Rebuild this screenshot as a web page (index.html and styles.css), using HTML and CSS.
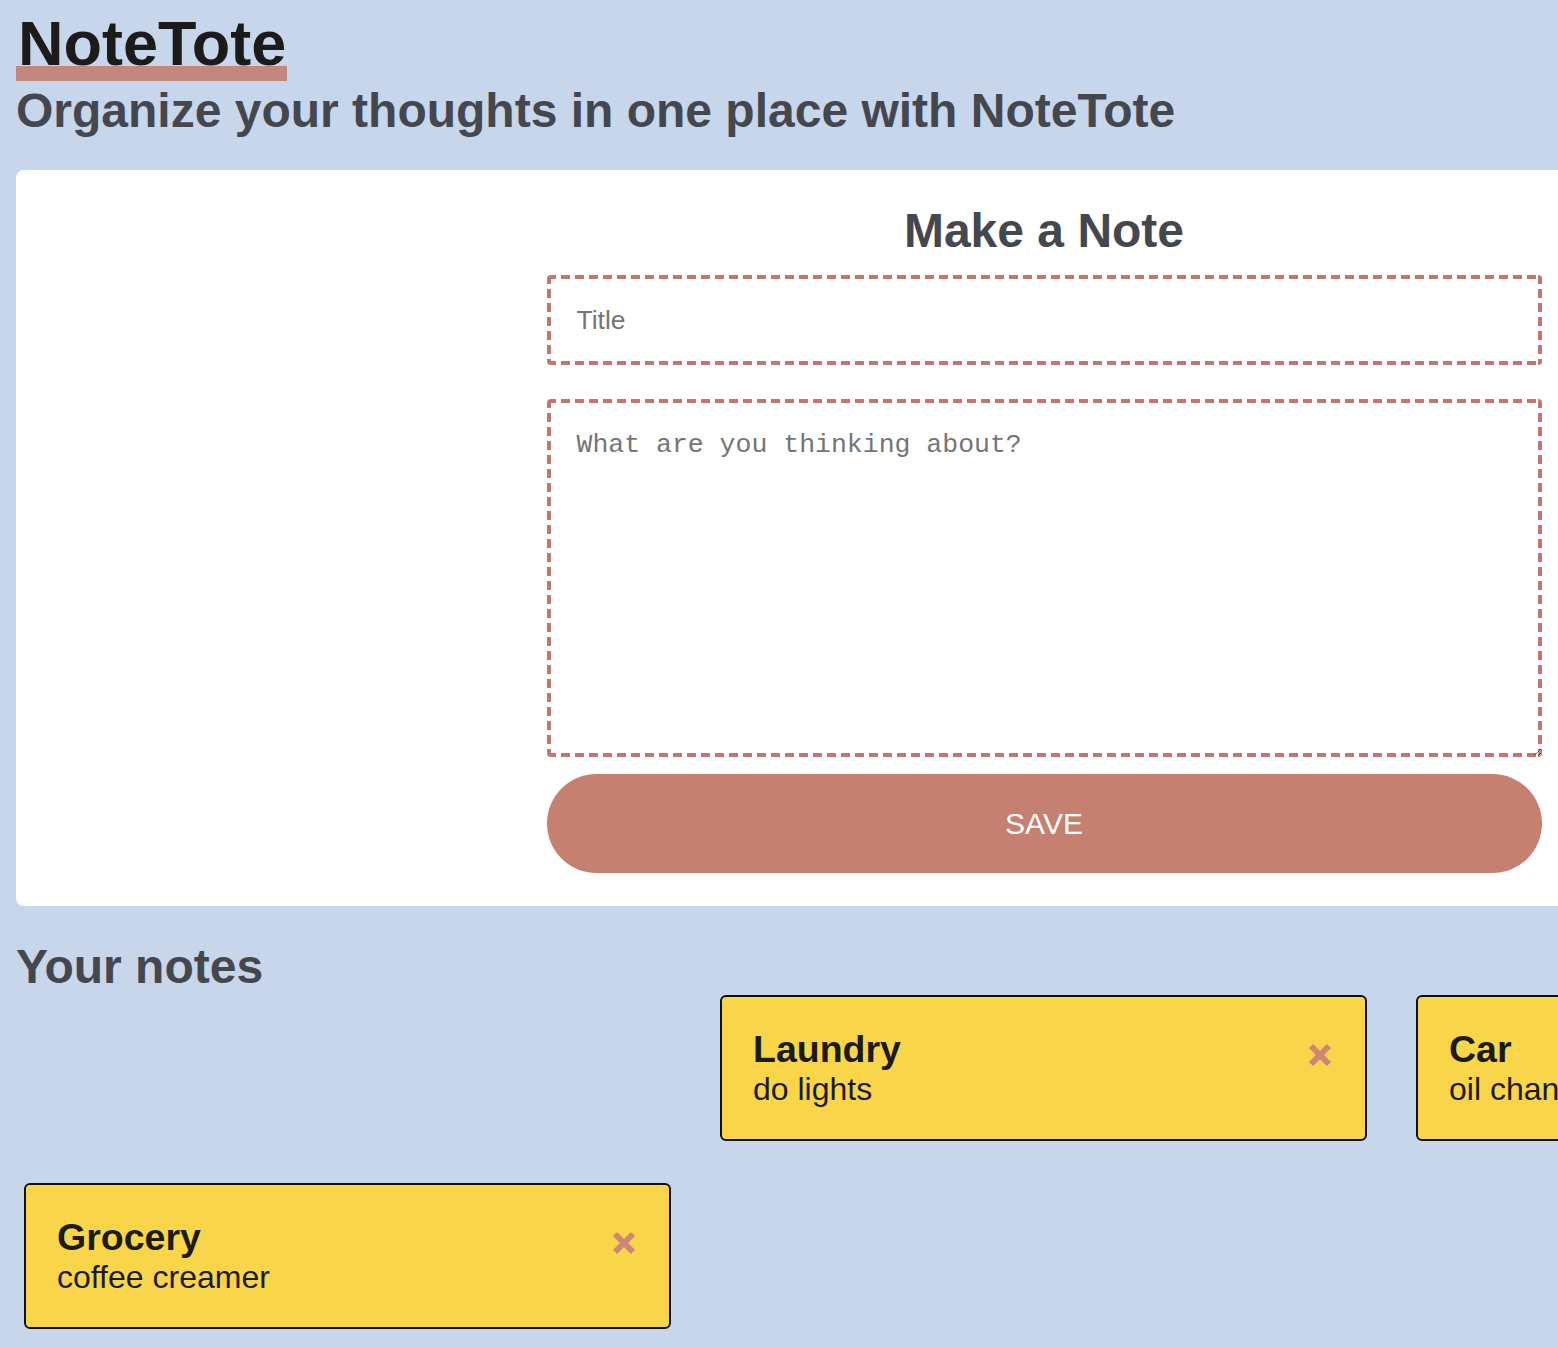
FILE: index.html
```html
<!DOCTYPE html>
<html lang="en">
<head>
<meta charset="utf-8">
<title>NoteTote</title>
<link rel="stylesheet" href="styles.css">
</head>
<body>
<div class="page">
  <header class="header">
    <h1 class="logo">NoteTote</h1>
    <h2 class="tagline">Organize your thoughts in one place with NoteTote</h2>
  </header>

  <section class="card">
    <form class="note-form">
      <h2 class="form-title">Make a Note</h2>
      <input class="field field-title" type="text" placeholder="Title">
      <textarea class="field field-body" placeholder="What are you thinking about?"></textarea>
      <button class="save" type="button">SAVE</button>
    </form>
  </section>

  <section class="notes">
    <h2 class="notes-title">Your notes</h2>
    <div class="notes-grid">
      <article class="note note-b">
        <div class="note-text">
          <h3 class="note-name">Laundry</h3>
          <p class="note-body">do lights</p>
        </div>
        <button class="delete" type="button" aria-label="Delete">
          <svg viewBox="0 0 24 24" width="24" height="24"><path d="M3 3 L21 21 M21 3 L3 21" stroke="#cf8579" stroke-width="6" fill="none"/></svg>
        </button>
      </article>
      <article class="note note-c">
        <div class="note-text">
          <h3 class="note-name">Car</h3>
          <p class="note-body">oil change</p>
        </div>
        <button class="delete" type="button" aria-label="Delete">
          <svg viewBox="0 0 24 24" width="24" height="24"><path d="M3 3 L21 21 M21 3 L3 21" stroke="#cf8579" stroke-width="6" fill="none"/></svg>
        </button>
      </article>
      <article class="note note-a">
        <div class="note-text">
          <h3 class="note-name">Grocery</h3>
          <p class="note-body">coffee creamer</p>
        </div>
        <button class="delete" type="button" aria-label="Delete">
          <svg viewBox="0 0 24 24" width="24" height="24"><path d="M3 3 L21 21 M21 3 L3 21" stroke="#cf8579" stroke-width="6" fill="none"/></svg>
        </button>
      </article>
    </div>
  </section>
</div>
</body>
</html>
```

FILE: styles.css
```css
html, body {
  margin: 0;
  padding: 0;
}
body {
  background: #c8d6eb;
  font-family: "Liberation Sans", Arial, Helvetica, sans-serif;
  overflow-x: hidden;
}
.page {
  padding: 0 16px;
  width: 2100px;
}
.header {
  padding-top: 20px;
}
.logo {
  display: inline-block;
  margin: 0;
  font-size: 63px;
  line-height: 46px;
  font-weight: 700;
  color: #1b1b1b;
  border-bottom: 15px solid #c4877e;
  padding: 0 1px 0 2px;
}
.tagline {
  margin: 2px 0 0;
  font-size: 48px;
  font-weight: 700;
  color: #45474f;
}
.card {
  margin-top: 32px;
  width: 2056px;
  box-sizing: border-box;
  background: #ffffff;
  border-radius: 8px;
  padding: 33px 0 33px;
  display: flex;
  justify-content: center;
}
.note-form {
  width: 995px;
  display: flex;
  flex-direction: column;
}
.form-title {
  margin: 0 0 17px;
  text-align: center;
  font-size: 48px;
  font-weight: 700;
  color: #45474f;
}
.field {
  --dash: #c3766a;
  box-sizing: border-box;
  width: 100%;
  border: none;
  border-radius: 4px;
  outline: none;
  background-color: #fff;
  background-image:
    repeating-linear-gradient(to right, var(--dash) 0 9px, transparent 9px 14px),
    repeating-linear-gradient(to right, var(--dash) 0 9px, transparent 9px 14px),
    repeating-linear-gradient(to bottom, var(--dash) 0 9px, transparent 9px 14px),
    repeating-linear-gradient(to bottom, var(--dash) 0 9px, transparent 9px 14px);
  background-size: 100% 4px, 100% 4px, 4px 100%, 4px 100%;
  background-position: left top, left bottom, left top, right top;
  background-repeat: no-repeat;
}
.field-title {
  height: 90px;
  padding: 0 30px;
  font-family: "Liberation Sans", Arial, sans-serif;
  font-size: 26.5px;
}
.field-title::placeholder {
  color: #757575;
}
.field-body {
  margin-top: 34px;
  height: 358px;
  padding: 31px 30px;
  font-family: "Liberation Mono", "Courier New", monospace;
  font-size: 26.5px;
  resize: vertical;
}
.field-body::placeholder {
  color: #757575;
}
.save {
  margin-top: 17px;
  height: 99px;
  border: none;
  border-radius: 50px;
  background: #c68072;
  color: #ffffff;
  font-family: "Liberation Sans", Arial, sans-serif;
  font-size: 30px;
}
.notes-title {
  margin: 33px 0 0;
  font-size: 48px;
  font-weight: 700;
  color: #45474f;
}
.notes-grid {
  margin-top: 1px;
  padding-left: 8px;
  display: grid;
  grid-template-columns: repeat(3, 647px);
  column-gap: 49px;
  row-gap: 42px;
}
.note-a { grid-column: 1; grid-row: 2; }
.note-b { grid-column: 2; grid-row: 1; }
.note-c { grid-column: 3; grid-row: 1; }
.note {
  box-sizing: border-box;
  height: 146px;
  background: #f9d649;
  border: 2px solid #111111;
  border-radius: 6px;
  padding: 31px 33px 0 31px;
  display: flex;
  justify-content: space-between;
  align-items: flex-start;
}
.note-name {
  margin: 0;
  font-size: 37.5px;
  font-weight: 700;
  color: #1b1b1b;
}
.note-body {
  margin: 0;
  font-size: 32px;
  color: #1b1b1b;
  white-space: nowrap;
}
.delete {
  margin-top: 15px;
  padding: 0;
  border: none;
  background: none;
  width: 24px;
  height: 24px;
  display: block;
}
.delete svg {
  display: block;
}
```
